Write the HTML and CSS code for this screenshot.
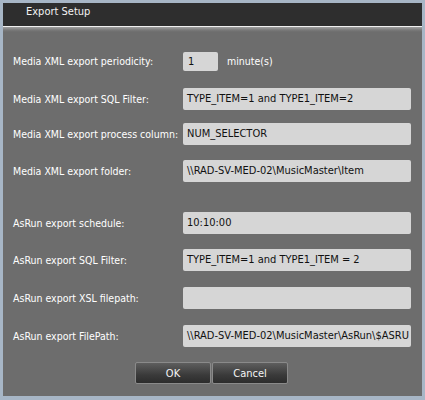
FILE: index.html
```html
<!DOCTYPE html>
<html>
<head>
<meta charset="utf-8">
<link rel="stylesheet" href="styles.css">
</head>
<body>
<div class="window">
  <div class="titlebar">Export Setup</div>
  <div class="body">
    <div class="form">
      <div class="row r1">
        <span class="label">Media XML export periodicity:</span>
        <div class="field-group">
          <div class="input small">1</div>
          <span class="unit">minute(s)</span>
        </div>
      </div>
      <div class="row r2">
        <span class="label">Media XML export SQL Filter:</span>
        <div class="input">TYPE_ITEM=1 and TYPE1_ITEM=2</div>
      </div>
      <div class="row r3">
        <span class="label">Media XML export process column:</span>
        <div class="input">NUM_SELECTOR</div>
      </div>
      <div class="row r4">
        <span class="label">Media XML export folder:</span>
        <div class="input">\\RAD-SV-MED-02\MusicMaster\Item</div>
      </div>
      <div class="row r5">
        <span class="label">AsRun export schedule:</span>
        <div class="input">10:10:00</div>
      </div>
      <div class="row r6">
        <span class="label">AsRun export SQL Filter:</span>
        <div class="input">TYPE_ITEM=1 and TYPE1_ITEM = 2</div>
      </div>
      <div class="row r7">
        <span class="label">AsRun export XSL filepath:</span>
        <div class="input"></div>
      </div>
      <div class="row r8">
        <span class="label">AsRun export FilePath:</span>
        <div class="input">\\RAD-SV-MED-02\MusicMaster\AsRun\$ASRU</div>
      </div>
    </div>
    <div class="buttons">
      <button class="btn">OK</button>
      <button class="btn">Cancel</button>
    </div>
  </div>
</div>
</body>
</html>
```
FILE: styles.css
```css
* { box-sizing: border-box; }
html, body { margin: 0; padding: 0; }
body {
  width: 425px;
  height: 400px;
  background: #a7b6c6;
  font-family: "DejaVu Sans Condensed", "DejaVu Sans", sans-serif;
}
.window {
  width: 425px;
  height: 400px;
  border: 3px solid #a7b6c6;
  border-bottom-width: 4px;
  display: flex;
  flex-direction: column;
  background: #6d6d6d;
}
.titlebar {
  height: 24px;
  flex: none;
  background: #2e2e2e;
  color: #f2f2f2;
  font-size: 11px;
  padding-left: 23px;
  line-height: 18px;
  border-bottom: 1px solid #f0f0f0;
}
.body {
  flex: 1;
  background: linear-gradient(to bottom, #a0a0a0 0px, #7a7a7a 3px, #6d6d6d 5px, #6d6d6d 100%);
  display: flex;
  flex-direction: column;
  padding-left: 10px;
}
.form {
  display: flex;
  flex-direction: column;
}
.row {
  display: flex;
  align-items: center;
  height: 22px;
}
.r1 { margin-top: 24px; height: 20px; }
.r2 { margin-top: 17px; }
.r3 { margin-top: 13px; }
.r4 { margin-top: 15px; }
.r5 { margin-top: 30px; }
.r6 { margin-top: 15px; }
.r7 { margin-top: 16px; }
.r8 { margin-top: 16px; }
.label {
  width: 170px;
  flex: none;
  color: #ffffff;
  font-size: 10.5px;
  white-space: nowrap;
}
.field-group {
  display: flex;
  align-items: center;
}
.input {
  width: 228px;
  height: 22px;
  background: #d6d6d6;
  border-radius: 2px;
  color: #111;
  font-size: 11px;
  line-height: 22px;
  padding-left: 4px;
  white-space: nowrap;
  overflow: hidden;
}
.input.small {
  width: 35px;
  height: 19px;
  line-height: 19px;
  padding-left: 5px;
}
.unit {
  color: #fff;
  font-size: 10.5px;
  margin-left: 9px;
}
.buttons {
  display: flex;
  justify-content: center;
  gap: 1px;
  margin-top: 15px;
  padding-right: 12px;
}
.btn {
  width: 76px;
  height: 22px;
  border: 1px solid #8a8a8a;
  border-radius: 2px;
  background: linear-gradient(to bottom, #5e5e5e 0%, #3a3a3a 60%, #2c2c2c 100%);
  color: #f4f4f4;
  font-family: "DejaVu Sans Condensed", "DejaVu Sans", sans-serif;
  font-size: 11px;
  padding: 0;
}
```
